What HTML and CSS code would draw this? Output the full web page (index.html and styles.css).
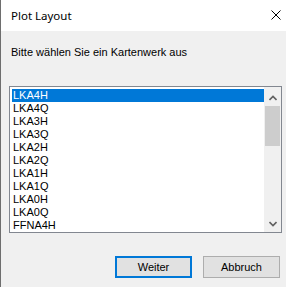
FILE: index.html
```html
<!DOCTYPE html>
<html>
<head>
	<meta charset="UTF-8">
	<title>Plot Layout</title>
	<link rel="stylesheet" href="styles.css">
</head>
<body>
<div class="window">
	<div class="titlebar">
		<span class="title">Plot Layout</span>
		<svg class="close" width="10" height="10" viewBox="0 0 10 10">
			<path d="M0.5 0.5 L9.5 9.5 M9.5 0.5 L0.5 9.5" stroke="#000" stroke-width="1" fill="none"/>
		</svg>
	</div>
	<div class="body">
		<div class="label">Bitte wählen Sie ein Kartenwerk aus</div>
		<div class="listbox">
			<div class="items">
				<div class="item selected">LKA4H</div>
				<div class="item">LKA4Q</div>
				<div class="item">LKA3H</div>
				<div class="item">LKA3Q</div>
				<div class="item">LKA2H</div>
				<div class="item">LKA2Q</div>
				<div class="item">LKA1H</div>
				<div class="item">LKA1Q</div>
				<div class="item">LKA0H</div>
				<div class="item">LKA0Q</div>
				<div class="item">FFNA4H</div>
			</div>
			<div class="scrollbar">
				<div class="arrow up">
					<svg width="8" height="6" viewBox="0 0 8 6"><path d="M0.5 5 L4 1.5 L7.5 5" stroke="#606060" stroke-width="1.6" fill="none"/></svg>
				</div>
				<div class="thumb"></div>
				<div class="track"></div>
				<div class="arrow down">
					<svg width="8" height="6" viewBox="0 0 8 6"><path d="M0.5 1 L4 4.5 L7.5 1" stroke="#606060" stroke-width="1.6" fill="none"/></svg>
				</div>
			</div>
		</div>
		<div class="buttons">
			<div class="button default">Weiter</div>
			<div class="button">Abbruch</div>
		</div>
	</div>
</div>
</body>
</html>
```

FILE: styles.css
```css
body{
	margin: 0;
}
.window{
	width: 286px;
	height: 287px;
	box-sizing: border-box;
	border-left: 1px solid #6e6e6e;
	background-color: #f0f0f0;
	display: flex;
	flex-direction: column;
	overflow: hidden;
}
.titlebar{
	height: 31px;
	flex: none;
	background-color: #fff;
	display: flex;
	align-items: center;
	padding-left: 10px;
	padding-right: 5px;
}
.title{
	font-family: "Segoe UI", "Noto Sans", sans-serif;
	font-size: 11.5px;
	color: #000;
	flex: 1;
}
.close{
	display: block;
	margin-top: -1px;
}
.body{
	padding: 14px 4px 0 8px;
	font-family: "Liberation Sans", Arial, sans-serif;
	font-size: 11px;
	color: #000;
}
.label{
	line-height: 15px;
	padding-left: 2px;
}
.listbox{
	margin-top: 26px;
	height: 147px;
	box-sizing: border-box;
	border: 1px solid #828790;
	background-color: #fff;
	display: flex;
}
.items{
	flex: 1;
	padding: 2px 0 0 2px;
	overflow: hidden;
}
.item{
	height: 13px;
	line-height: 13px;
	padding-left: 1px;
	white-space: nowrap;
}
.item.selected{
	background-color: #0078d7;
	color: #fff;
}
.scrollbar{
	width: 17px;
	background-color: #f0f0f0;
	display: flex;
	flex-direction: column;
}
.arrow{
	height: 17px;
	display: flex;
	align-items: center;
	justify-content: center;
}
.arrow.up{
	margin-top: 2px;
}
.thumb{
	height: 40px;
	margin: 0 1px;
	background-color: #cdcdcd;
}
.track{
	flex: 1;
}
.buttons{
	margin-top: 23px;
	padding-right: 2px;
	display: flex;
	justify-content: flex-end;
	gap: 11px;
}
.button{
	width: 77px;
	height: 22px;
	box-sizing: border-box;
	border: 1px solid #adadad;
	background-color: #e1e1e1;
	display: flex;
	align-items: center;
	justify-content: center;
}
.button.default{
	border: 2px solid #0078d7;
}
```
